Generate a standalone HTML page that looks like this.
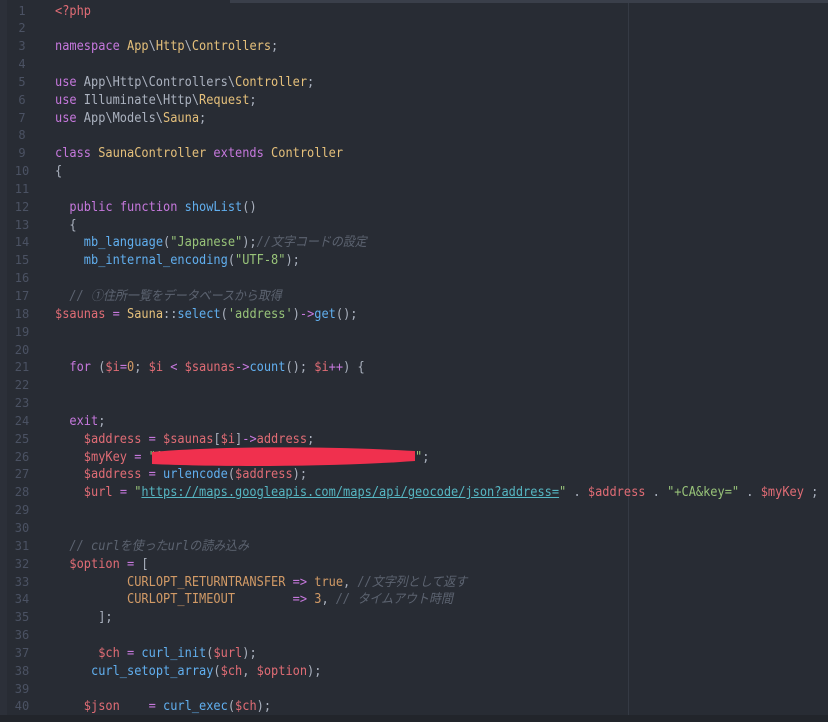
<!DOCTYPE html>
<html><head><meta charset="utf-8"><style>
body{margin:0;width:828px;height:722px;background:#282c34;overflow:hidden;position:relative;font-family:"DejaVu Sans Mono","Noto Sans CJK JP",monospace;}
.top{position:absolute;left:230px;top:0;width:598px;height:3px;background:#3a3f4a}
.bot{position:absolute;left:0;top:715px;width:828px;height:7px;background:#22252b}
.vl{position:absolute;left:628px;top:3px;width:1px;height:712px;background:#353a44}
.gl{position:absolute;left:0;top:0;width:7px;height:722px;background:#2c3039}
#g,#c{position:absolute;top:2.5px;font-size:13px;line-height:17.85px;white-space:pre;color:#abb2bf}
#g{left:8px;width:28px;text-align:center;color:#4b5263;font-size:12px}
#c{left:55px;transform:scaleX(0.92);transform-origin:0 0}
.k{color:#c678dd}.y{color:#e5c07b}.r{color:#e06c75}.b{color:#61afef}.s{color:#98c379}.o{color:#d19a66}.cm{color:#5c6370;font-style:italic}.u{color:#56b6c2;text-decoration:underline}.t{color:#e06c75}
</style></head><body>
<div class="gl"></div><div class="top"></div><div class="vl"></div><div class="bot"></div>
<div id="g">1
2
3
4
5
6
7
8
9
10
11
12
13
14
15
16
17
18
19
20
21
22
23
24
25
26
27
28
29
30
31
32
33
34
35
36
37
38
39
40</div>
<div id="c"><span class="t">&lt;?php</span>

<span class="k">namespace</span> <span class="y">App</span>\<span class="y">Http</span>\<span class="y">Controllers</span>;

<span class="k">use</span> App\Http\Controllers\<span class="y">Controller</span>;
<span class="k">use</span> Illuminate\Http\<span class="y">Request</span>;
<span class="k">use</span> App\Models\<span class="y">Sauna</span>;

<span class="k">class</span> <span class="y">SaunaController</span> <span class="k">extends</span> <span class="y">Controller</span>
{

  <span class="k">public</span> <span class="k">function</span> <span class="b">showList</span>()
  {
    <span class="b">mb_language</span>(<span class="s">"Japanese"</span>);<span class="cm">//文字コードの設定</span>
    <span class="b">mb_internal_encoding</span>(<span class="s">"UTF-8"</span>);

  <span class="cm">// ①住所一覧をデータベースから取得</span>
<span class="r">$saunas</span> <span class="k">=</span> <span class="y">Sauna</span>::<span class="b">select</span>(<span class="s">'address'</span>)<span class="k">-&gt;</span><span class="b">get</span>();


  <span class="k">for</span> (<span class="r">$i</span><span class="k">=</span><span class="o">0</span>; <span class="r">$i</span> <span class="k">&lt;</span> <span class="r">$saunas</span><span class="k">-&gt;</span><span class="b">count</span>(); <span class="r">$i</span><span class="k">++</span>) {


  <span class="k">exit</span>;
    <span class="r">$address</span> <span class="k">=</span> <span class="r">$saunas</span>[<span class="r">$i</span>]<span class="k">-&gt;</span><span class="r">address</span>;
    <span class="r">$myKey</span> <span class="k">=</span> <span class="s">"AIzaSyXXXXXXXXXXXXXXXXXXXXXXXXXXXXKY"</span>;
    <span class="r">$address</span> <span class="k">=</span> <span class="b">urlencode</span>(<span class="r">$address</span>);
    <span class="r">$url</span> <span class="k">=</span> <span class="s">"</span><span class="u">https://maps.googleapis.com/maps/api/geocode/json?address=</span><span class="s">"</span> . <span class="r">$address</span> . <span class="s">"+CA&amp;key="</span> . <span class="r">$myKey</span> ;


  <span class="cm">// curlを使ったurlの読み込み</span>
  <span class="r">$option</span> <span class="k">=</span> [
          <span class="o">CURLOPT_RETURNTRANSFER</span> <span class="k">=&gt;</span> <span class="o">true</span>, <span class="cm">//文字列として返す</span>
          <span class="o">CURLOPT_TIMEOUT</span>        <span class="k">=&gt;</span> <span class="o">3</span>, <span class="cm">// タイムアウト時間</span>
      ];

      <span class="r">$ch</span> <span class="k">=</span> <span class="b">curl_init</span>(<span class="r">$url</span>);
     <span class="b">curl_setopt_array</span>(<span class="r">$ch</span>, <span class="r">$option</span>);

    <span class="r">$json</span>    <span class="k">=</span> <span class="b">curl_exec</span>(<span class="r">$ch</span>);</div>
<svg style="position:absolute;left:0;top:0" width="828" height="722"><path d="M152 452 C220 446 330 446 415 451 L415 461 C330 467 220 467 152 464 Z" fill="#f0304e"/></svg>
</body></html>
